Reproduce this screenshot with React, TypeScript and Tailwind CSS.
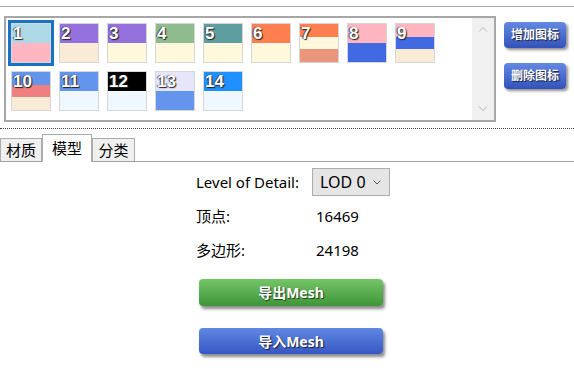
import React from 'react';

type Tile = { n: number; bands: string[] };

const tiles: Tile[] = [
  { n: 1, bands: ['#add8e6', '#ffb6c1'] },
  { n: 2, bands: ['#9370db', '#faebd7'] },
  { n: 3, bands: ['#9370db', '#fff8dc'] },
  { n: 4, bands: ['#8fbc8f', '#fff8dc'] },
  { n: 5, bands: ['#5f9ea0', '#fff8dc'] },
  { n: 6, bands: ['#ff7f50', '#fff8dc'] },
  { n: 7, bands: ['#ff7f50', '#fff8dc', '#e9967a'] },
  { n: 8, bands: ['#ffb6c1', '#4169e1'] },
  { n: 9, bands: ['#ffb6c1', '#4169e1', '#faebd7'] },
  { n: 10, bands: ['#6495ed', '#f08080', '#faebd7'] },
  { n: 11, bands: ['#6495ed', '#f0f8ff'] },
  { n: 12, bands: ['#000000', '#f0f8ff'] },
  { n: 13, bands: ['#e6e6fa', '#6495ed'] },
  { n: 14, bands: ['#1e90ff', '#f0f8ff'] },
];

const font = { fontFamily: '"Noto Sans", "Noto Sans CJK SC", sans-serif' };

function TileCell({ tile, selected }: { tile: Tile; selected?: boolean }) {
  return (
    <div
      className={
        selected
          ? 'w-[46px] h-[46px] border-[3px] border-[#1a72c6]'
          : 'w-[46px] h-[46px] p-[3px]'
      }
    >
      <div className="relative w-[40px] h-[40px] flex flex-col border border-[#d6d6d6]">
        {tile.bands.map((c, i) => (
          <div key={i} className="flex-1" style={{ background: c }} />
        ))}
        <span
          className="absolute left-[1px] top-[1px] text-[17px] font-bold leading-none text-white [text-shadow:1px_1px_1px_#222,-1px_0_1px_#444]"
          style={{ fontFamily: '"Liberation Sans", Arial, sans-serif' }}
        >
          {tile.n}
        </span>
      </div>
    </div>
  );
}

function SideButton({ label }: { label: string }) {
  return (
    <button className="w-[62px] h-[26px] rounded-[4px] bg-gradient-to-b from-[#6489e3] to-[#3352ba] text-white text-[12px] font-bold shadow-[2px_2px_3px_rgba(0,0,0,0.45)] [text-shadow:1px_1px_1px_#1a1a3a]">
      {label}
    </button>
  );
}

export default function App() {
  return (
    <div className="w-[574px] h-[379px] bg-white overflow-hidden text-black" style={font}>
      <div className="h-[6px]" />
      <div className="border-t border-[#a8a8a8]" />

      <div className="flex mt-[9px] pl-[4px]">
        <div className="w-[492px] h-[106px] border-2 border-[#a6a6a6] flex">
          <div className="flex-1 pl-[2px] pt-[2px]">
            <div className="grid grid-cols-[repeat(9,46px)] gap-[2px]">
              {tiles.map((t) => (
                <TileCell key={t.n} tile={t} selected={t.n === 1} />
              ))}
            </div>
          </div>
          <div className="w-[22px] bg-[#f0f0f0] flex flex-col items-center justify-between py-[8px] text-[#b5b5b5]">
            <svg width="10" height="6" viewBox="0 0 10 6" fill="none" stroke="currentColor" strokeWidth="1">
              <path d="M1 5.5 L5 1.5 L9 5.5" />
            </svg>
            <svg width="10" height="6" viewBox="0 0 10 6" fill="none" stroke="currentColor" strokeWidth="1">
              <path d="M1 0.5 L5 4.5 L9 0.5" />
            </svg>
          </div>
        </div>
        <div className="ml-[8px] mt-[6px] flex flex-col gap-[15px]">
          <SideButton label="增加图标" />
          <SideButton label="删除图标" />
        </div>
      </div>

      <div className="mt-[6px] border-t border-dotted border-[#444]" />

      <div className="mt-[4px] flex items-end border-b border-[#a0a0a0] h-[29px]">
        <div className="w-[42px] h-[23px] bg-[#f0f0f0] border border-b-0 border-[#acacac] flex items-center justify-center text-[15px]">
          材质
        </div>
        <div className="w-[50px] h-[28px] -mb-px bg-white border border-b-0 border-[#acacac] flex items-start pt-[2px] justify-center text-[15px]">
          模型
        </div>
        <div className="w-[43px] h-[23px] bg-[#f0f0f0] border border-b-0 border-[#acacac] flex items-center justify-center text-[15px]">
          分类
        </div>
      </div>

      <div className="ml-[196px] mt-[6px] text-[15px]">
        <div className="flex items-center h-[28px]">
          <span className="w-[116px]">Level of Detail:</span>
          <div className="w-[78px] h-[28px] bg-[#e5e5e5] border border-[#adadad] flex items-center pl-[7px] pr-[8px] justify-between">
            <span className="text-[16px]">LOD 0</span>
            <svg width="8" height="5" viewBox="0 0 8 5" fill="none" stroke="#555" strokeWidth="1">
              <path d="M0.5 0.5 L4 4 L7.5 0.5" />
            </svg>
          </div>
        </div>
        <div className="flex items-center h-[34px] mt-[3px]">
          <span className="w-[120px]">顶点:</span>
          <span>16469</span>
        </div>
        <div className="flex items-center h-[34px]">
          <span className="w-[120px]">多边形:</span>
          <span>24198</span>
        </div>
      </div>

      <div className="ml-[199px] mt-[12px] flex flex-col gap-[22px]">
        <button className="w-[184px] h-[27px] rounded-[4px] bg-gradient-to-b from-[#74c567] to-[#3e9639] text-white text-[14px] font-bold shadow-[2px_3px_3px_rgba(0,0,0,0.45)] [text-shadow:1px_1px_1px_#1e3a1e]">
          导出Mesh
        </button>
        <button className="w-[184px] h-[26px] rounded-[4px] bg-gradient-to-b from-[#6088e2] to-[#3657c4] text-white text-[14px] font-bold shadow-[2px_3px_3px_rgba(0,0,0,0.45)] [text-shadow:1px_1px_1px_#1a1a3a]">
          导入Mesh
        </button>
      </div>
    </div>
  );
}
